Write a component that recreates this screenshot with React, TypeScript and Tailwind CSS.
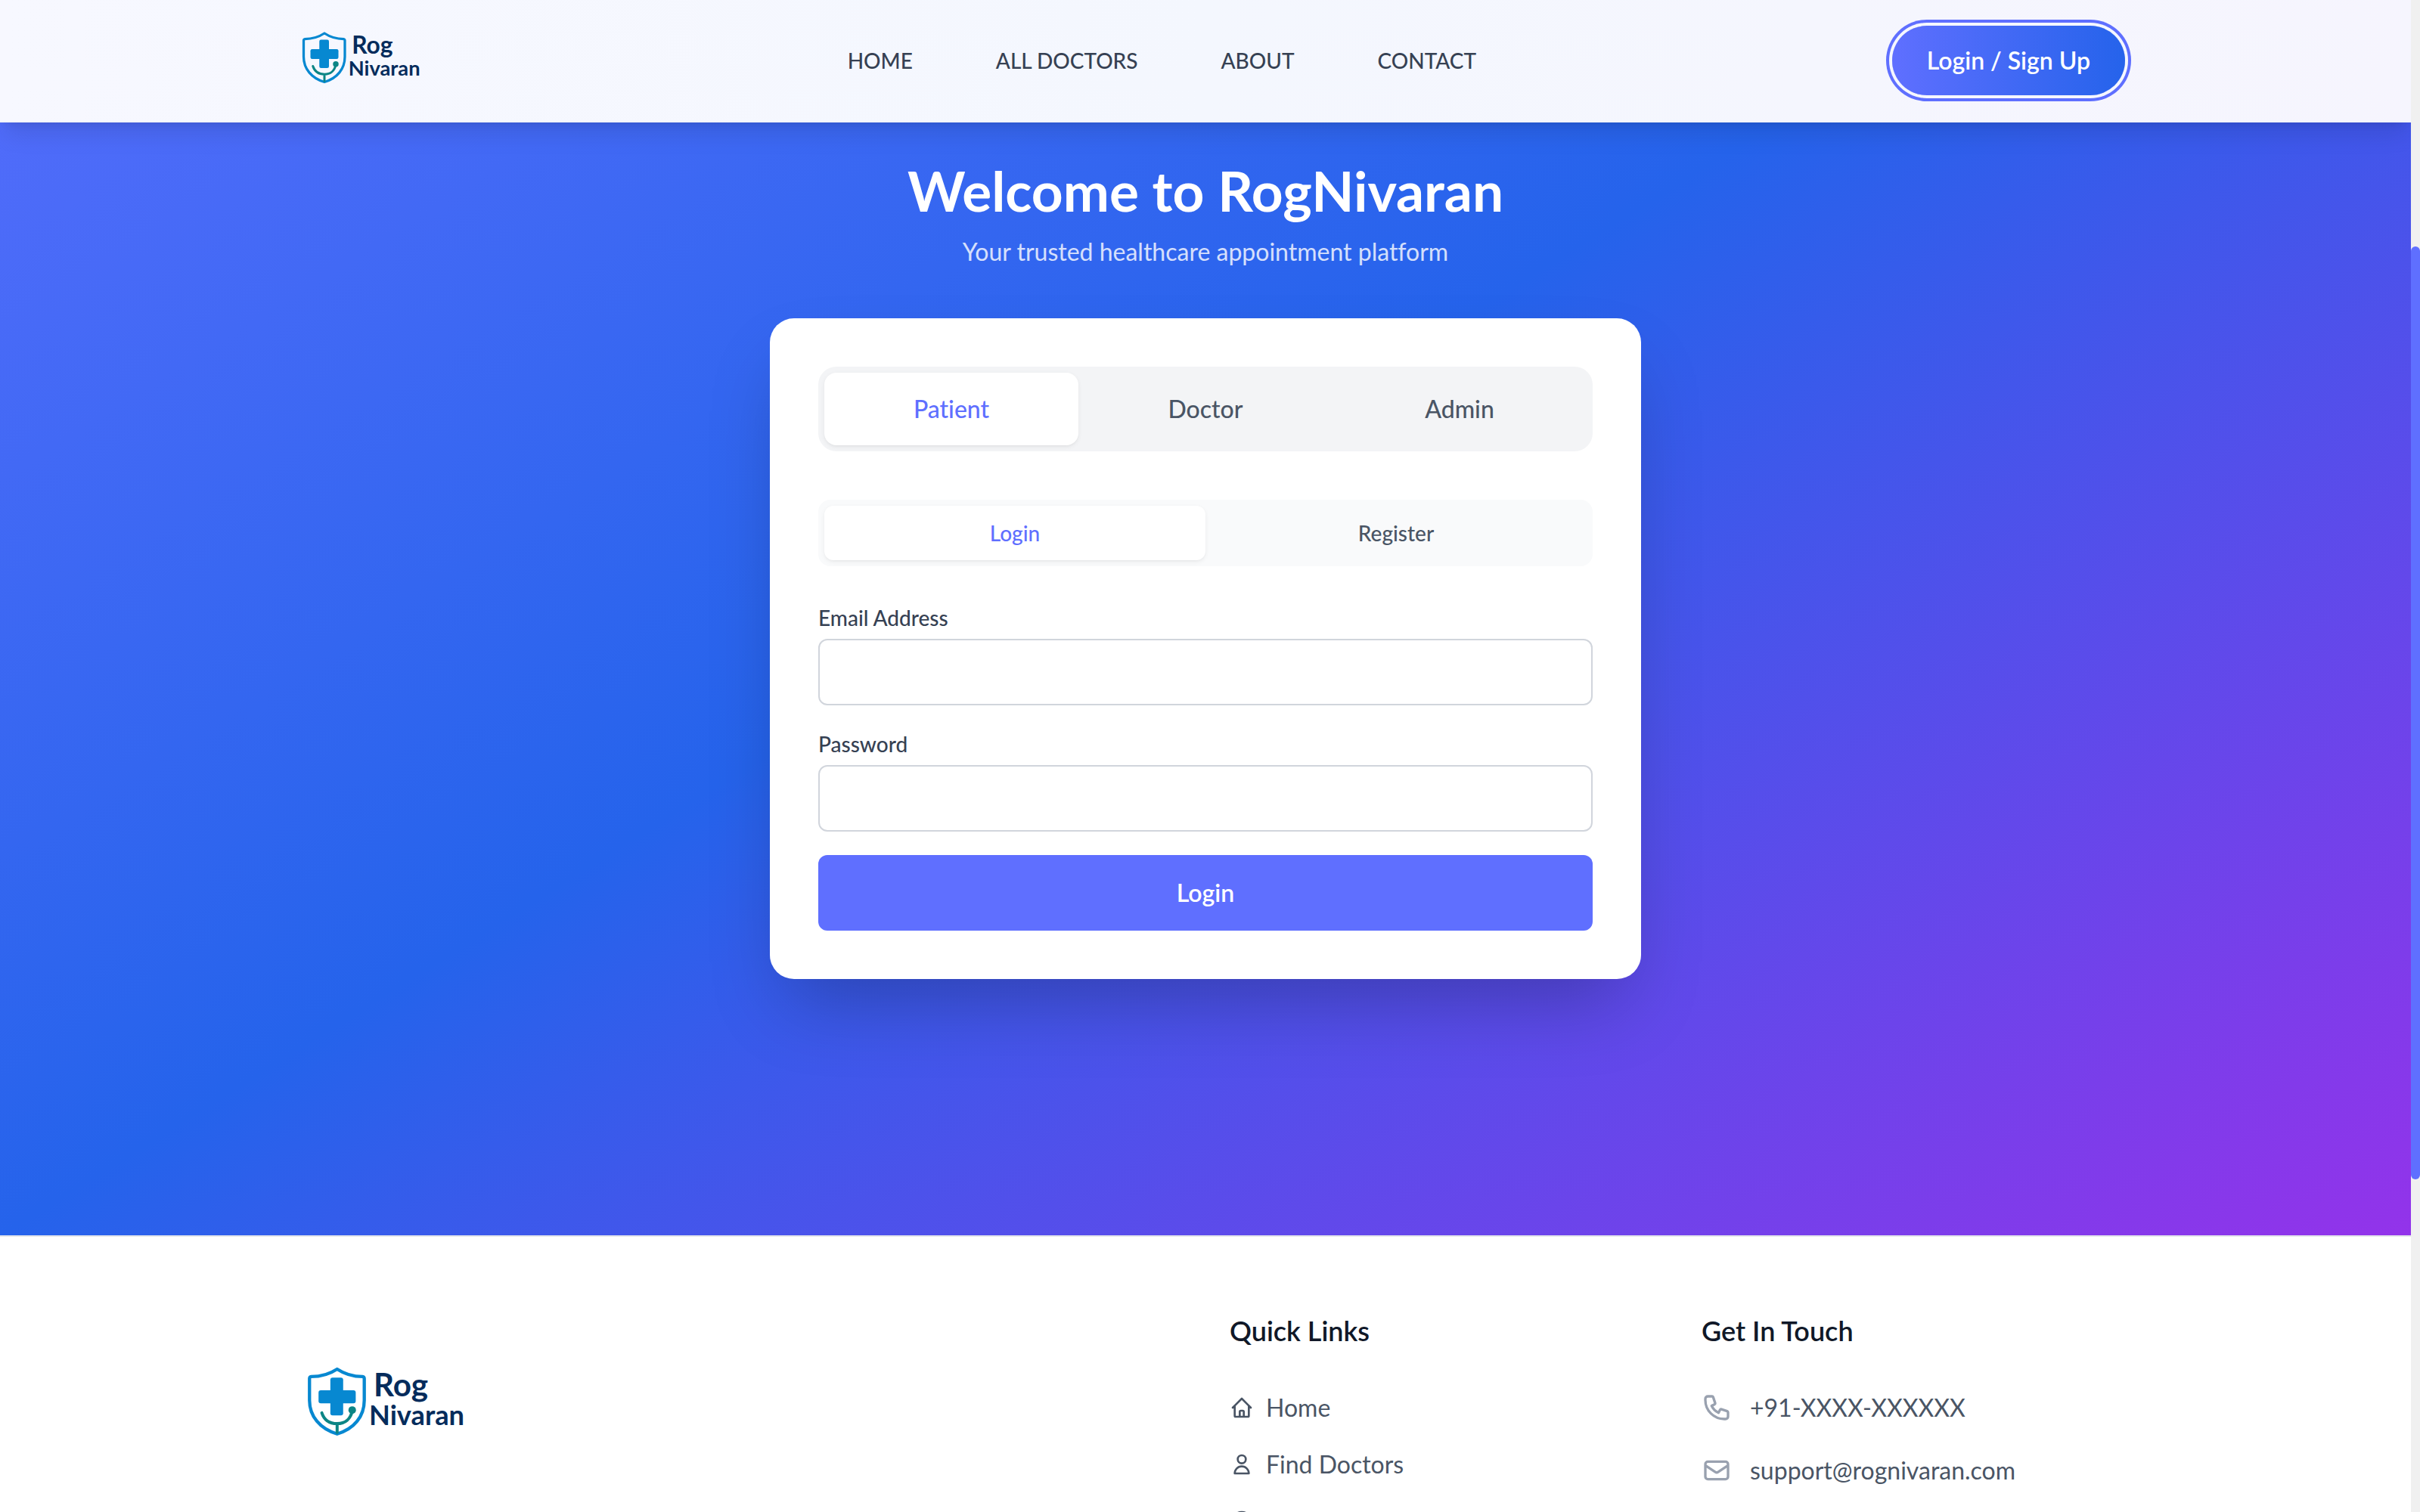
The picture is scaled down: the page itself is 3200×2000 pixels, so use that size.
import type { ReactNode } from 'react';
import { useState } from 'react';

function Logo({ className }: { className: string }) {
  return (
    <svg viewBox="-6 70 772 340" className={className} role="img" aria-label="Rog Nivaran">
      <path
        d="M198 94C168 114 130 124 95 124Q88 125 88 132V218C88 282 130 332 198 352C266 332 306 282 306 218V132Q306 125 299 124C264 124 228 114 198 94Z"
        fill="none"
        stroke="#0788d1"
        strokeWidth="13"
        strokeLinejoin="round"
      />
      <rect x="171" y="128" width="51" height="150" rx="9" fill="#0788d1" />
      <rect x="124" y="178" width="148" height="52" rx="9" fill="#0788d1" />
      <path
        d="M137 268C146 296 168 311 198 311C230 311 252 292 258 260M198 311V346"
        fill="none"
        stroke="#0c8585"
        strokeWidth="12"
        strokeLinecap="round"
      />
      <circle cx="258" cy="257" r="15" fill="#0c8585" />
      <text x="343" y="203" fontSize="127" className="fill-[#052c5c] font-bold">Rog</text>
      <text x="325" y="316" fontSize="109" className="fill-[#052c5c] font-bold">Nivaran</text>
    </svg>
  );
}

function OutlineIcon({ d, className }: { d: string; className: string }) {
  return (
    <svg
      viewBox="0 0 24 24"
      fill="none"
      stroke="currentColor"
      strokeWidth="2"
      strokeLinecap="round"
      strokeLinejoin="round"
      className={className}
      aria-hidden="true"
    >
      <path d={d} />
    </svg>
  );
}

const HOME_ICON =
  'M3 12l2-2m0 0l7-7 7 7M5 10v10a1 1 0 001 1h3m10-11l2 2m-2-2v10a1 1 0 01-1 1h-3m-6 0a1 1 0 001-1v-4a1 1 0 011-1h2a1 1 0 011 1v4a1 1 0 001 1m-6 0h6';
const USER_ICON = 'M16 7a4 4 0 11-8 0 4 4 0 018 0zM12 14a7 7 0 00-7 7h14a7 7 0 00-7-7z';
const INFO_ICON = 'M13 16h-1v-4h-1m1-4h.01M21 12a9 9 0 11-18 0 9 9 0 0118 0z';
const PHONE_ICON =
  'M3 5a2 2 0 012-2h3.28a1 1 0 01.948.684l1.498 4.493a1 1 0 01-.502 1.21l-2.257 1.13a11.042 11.042 0 005.516 5.516l1.13-2.257a1 1 0 011.21-.502l4.493 1.498a1 1 0 01.684.949V19a2 2 0 01-2 2h-1C9.716 21 3 14.284 3 6V5z';
const MAIL_ICON =
  'M3 8l7.89 5.26a2 2 0 002.22 0L21 8M5 19h14a2 2 0 002-2V7a2 2 0 00-2-2H5a2 2 0 00-2 2v10a2 2 0 002 2z';

const NAV = ['HOME', 'ALL DOCTORS', 'ABOUT', 'CONTACT'];

const QUICK_LINKS = [
  { label: 'Home', icon: HOME_ICON },
  { label: 'Find Doctors', icon: USER_ICON },
];

const CONTACTS = [
  { label: '+91-XXXX-XXXXXX', href: 'tel:+91', icon: PHONE_ICON },
  { label: 'support@rognivaran.com', href: 'mailto:support@rognivaran.com', icon: MAIL_ICON },
];

function Header() {
  return (
    <header className="relative z-10 shrink-0 border-b-2 border-[#f2f4fa] bg-linear-to-r/srgb from-[#f7f8ff] via-[#f4f7fe] to-[#f6f5fe] px-16 shadow-[0_20px_30px_-6px_rgba(0,0,0,0.1),0_8px_12px_-8px_rgba(0,0,0,0.1)]">
      <div className="mx-auto flex h-40 max-w-[2432px] items-center justify-between">
        <a href="#home">
          <Logo className="h-[85px] w-auto" />
        </a>
        <nav className="flex items-center gap-[110px]">
          {NAV.map((item) => (
            <a key={item} href="#" className="text-[28px] font-medium text-gray-700">
              {item}
            </a>
          ))}
        </nav>
        <button
          type="button"
          className="h-[92px] rounded-full bg-linear-to-r/srgb from-[#5f6fff] to-[#2563eb] px-[46px] text-[32px] font-semibold text-white ring-4 ring-[#5f6fff] ring-offset-4 ring-offset-[#f5f7fe]"
        >
          Login / Sign Up
        </button>
      </div>
    </header>
  );
}

function Tab({ active, className, onClick, children }: { active: boolean; className: string; onClick: () => void; children: ReactNode }) {
  return (
    <button
      type="button"
      aria-pressed={active}
      onClick={onClick}
      className={`flex-1 font-medium ${className} ${
        active
          ? 'bg-white text-[#5f6fff] shadow-[0_2px_6px_rgba(0,0,0,0.06),0_2px_4px_-2px_rgba(0,0,0,0.06)]'
          : 'text-gray-600'
      }`}
    >
      {children}
    </button>
  );
}

function Field({ id, label, type }: { id: string; label: string; type: string }) {
  return (
    <div>
      <label htmlFor={id} className="mb-2 block text-[28px] leading-[40px] font-medium text-gray-700">
        {label}
      </label>
      <input
        id={id}
        type={type}
        className="block h-[88px] w-full rounded-xl border-2 border-gray-300 bg-white px-6 text-[32px] outline-none"
      />
    </div>
  );
}

function AuthCard() {
  const [role, setRole] = useState('Patient');
  const [mode, setMode] = useState('Login');
  return (
    <div className="w-full max-w-[1152px] rounded-[32px] bg-white p-16 shadow-[0_50px_100px_-24px_rgba(0,0,0,0.25)]">
      <div className="mb-16 flex h-28 rounded-3xl bg-gray-100 p-2">
        {['Patient', 'Doctor', 'Admin'].map((r) => (
          <Tab key={r} active={r === role} onClick={() => setRole(r)} className="rounded-2xl text-[32px]">
            {r}
          </Tab>
        ))}
      </div>
      <div className="mb-12 flex h-[88px] rounded-2xl bg-gray-50 p-2">
        {['Login', 'Register'].map((m) => (
          <Tab key={m} active={m === mode} onClick={() => setMode(m)} className="rounded-xl text-[28px]">
            {m}
          </Tab>
        ))}
      </div>
      <form className="flex flex-col gap-[31px]" onSubmit={(e) => e.preventDefault()}>
        <Field id="email" label="Email Address" type="email" />
        <Field id="password" label="Password" type="password" />
        <button type="submit" className="h-[100px] rounded-xl bg-[#5f6fff] text-[32px] font-semibold text-white">
          Login
        </button>
      </form>
    </div>
  );
}

function Footer() {
  return (
    <footer className="shrink-0 border-t-2 border-gray-200 bg-white px-16 pt-24">
      <div className="mx-auto grid max-w-[2432px] grid-cols-4 gap-16">
        <div className="col-span-2 pt-[71px]">
          <Logo className="h-[113px] w-auto" />
        </div>
        <div>
          <h3 className="mb-[47px] text-[36px] leading-[57px] font-semibold text-gray-900">Quick Links</h3>
          <ul className="flex flex-col gap-6">
            {QUICK_LINKS.map(({ label, icon }) => (
              <li key={label}>
                <a href="#" className="flex items-center gap-4 text-[32px] leading-[51px] text-gray-600">
                  <OutlineIcon d={icon} className="size-8" />
                  {label}
                </a>
              </li>
            ))}
            <li>
              <a href="#" aria-label="About" className="flex h-[51px] items-center text-gray-600">
                <OutlineIcon d={INFO_ICON} className="size-8" />
              </a>
            </li>
          </ul>
        </div>
        <div>
          <h3 className="mb-[47px] text-[36px] leading-[57px] font-semibold text-gray-900">Get In Touch</h3>
          <ul className="flex flex-col gap-8">
            {CONTACTS.map(({ label, href, icon }) => (
              <li key={label}>
                <a href={href} className="flex items-center gap-6 text-[32px] leading-[51px] text-gray-600">
                  <OutlineIcon d={icon} className="size-10 text-gray-400" />
                  {label}
                </a>
              </li>
            ))}
          </ul>
        </div>
      </div>
    </footer>
  );
}

export default function App() {
  return (
    <div className="flex h-screen overflow-hidden bg-white font-['Lato',sans-serif] [font-variant-ligatures:none]">
      <div className="flex min-w-0 flex-1 flex-col overflow-hidden">
        <Header />
        <main className="flex shrink-0 flex-col items-center bg-linear-to-br/srgb from-[#5f6fff] via-[#2563eb] to-[#9333ea] bg-[length:100%_2000px] bg-bottom px-8 pt-[50px] pb-[339px]">
          <h1 className="text-[73px] leading-[80px] font-bold text-white">Welcome to RogNivaran</h1>
          <p className="mt-[17px] mb-16 text-[32px] leading-[48px] text-white/80">
            Your trusted healthcare appointment platform
          </p>
          <AuthCard />
        </main>
        <Footer />
      </div>
      <div className="grid w-3 shrink-0 grid-rows-[163fr_617fr_220fr] bg-[#f0f0f0]" aria-hidden="true">
        <div className="row-start-2 rounded-full bg-[#5f6fff]" />
      </div>
    </div>
  );
}
